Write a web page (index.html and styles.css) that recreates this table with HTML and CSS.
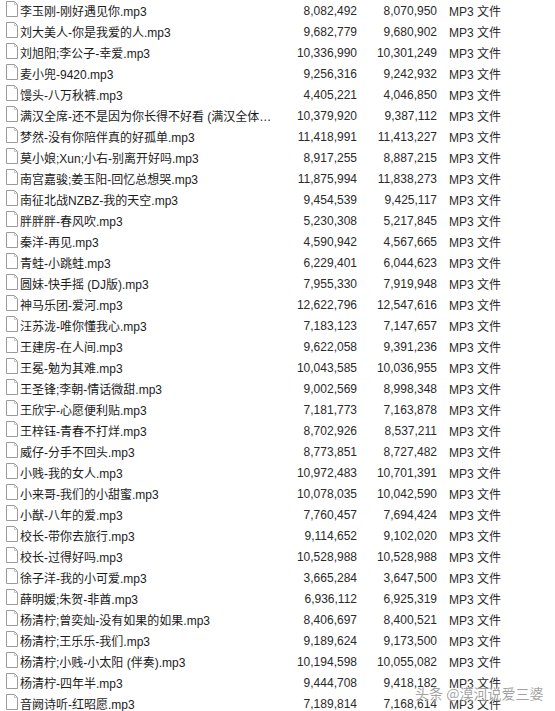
FILE: index.html
```html
<!DOCTYPE html>
<html lang="zh">
<head>
<meta charset="utf-8">
<link rel="stylesheet" href="styles.css">
</head>
<body>
<div class="list" id="list"></div>
<div class="watermark">头条 @漠河说爱三婆</div>
<script src="app.js"></script>
</body>
</html>
```
FILE: styles.css
```css
html, body { margin: 0; padding: 0; background: #ffffff; }
body { width: 555px; height: 711px; overflow: hidden; position: relative;
  font-family: "Liberation Sans", "Noto Sans CJK SC", sans-serif; font-size: 12px; color: #1e1e1e; }
.list { display: flex; flex-direction: column; }
.row { display: grid; grid-template-columns: 20px 258px 79px 80px 1fr; height: 21px; align-items: center; }
.icon { display: flex; justify-content: flex-start; padding-left: 6px; align-self: start; padding-top: 1px; }
.icon svg { display: block; }
.name { white-space: nowrap; overflow: hidden; text-overflow: ellipsis; color: #1b1b1b; }
.num { text-align: right; color: #2a2a2a; }
.type { padding-left: 12px; color: #2a2a2a; white-space: nowrap; }
.watermark { position: absolute; left: 415px; top: 683px; font-size: 14px; color: rgba(120,120,120,0.7);
  font-family: "Noto Sans CJK SC", sans-serif;
  text-shadow: 0 0 1px #fff, 0 0 2px #fff; white-space: nowrap; }
```
FILE: app.js
```js
const data = [
["李玉刚-刚好遇见你.mp3","8,082,492","8,070,950"],
["刘大美人-你是我爱的人.mp3","9,682,779","9,680,902"],
["刘旭阳;李公子-幸爱.mp3","10,336,990","10,301,249"],
["麦小兜-9420.mp3","9,256,316","9,242,932"],
["馒头-八万秋裤.mp3","4,405,221","4,046,850"],
["满汉全席-还不是因为你长得不好看 (满汉全体版).mp3","10,379,920","9,387,112"],
["梦然-没有你陪伴真的好孤单.mp3","11,418,991","11,413,227"],
["莫小娘;Xun;小右-别离开好吗.mp3","8,917,255","8,887,215"],
["南宫嘉骏;姜玉阳-回忆总想哭.mp3","11,875,994","11,838,273"],
["南征北战NZBZ-我的天空.mp3","9,454,539","9,425,117"],
["胖胖胖-春风吹.mp3","5,230,308","5,217,845"],
["秦洋-再见.mp3","4,590,942","4,567,665"],
["青蛙-小跳蛙.mp3","6,229,401","6,044,623"],
["圆妹-快手摇 (DJ版).mp3","7,955,330","7,919,948"],
["神马乐团-爱河.mp3","12,622,796","12,547,616"],
["汪苏泷-唯你懂我心.mp3","7,183,123","7,147,657"],
["王建房-在人间.mp3","9,622,058","9,391,236"],
["王冕-勉为其难.mp3","10,043,585","10,036,955"],
["王圣锋;李朝-情话微甜.mp3","9,002,569","8,998,348"],
["王欣宇-心愿便利贴.mp3","7,181,773","7,163,878"],
["王梓钰-青春不打烊.mp3","8,702,926","8,537,211"],
["威仔-分手不回头.mp3","8,773,851","8,727,482"],
["小贱-我的女人.mp3","10,972,483","10,701,391"],
["小来哥-我们的小甜蜜.mp3","10,078,035","10,042,590"],
["小猷-八年的爱.mp3","7,760,457","7,694,424"],
["校长-带你去旅行.mp3","9,114,652","9,102,020"],
["校长-过得好吗.mp3","10,528,988","10,528,988"],
["徐子洋-我的小可爱.mp3","3,665,284","3,647,500"],
["薛明媛;朱贺-非酋.mp3","6,936,112","6,925,319"],
["杨清柠;曾奕灿-没有如果的如果.mp3","8,406,697","8,400,521"],
["杨清柠;王乐乐-我们.mp3","9,189,624","9,173,500"],
["杨清柠;小贱-小太阳 (伴奏).mp3","10,194,598","10,055,082"],
["杨清柠-四年半.mp3","9,444,708","9,418,182"],
["音阙诗听-红昭愿.mp3","7,189,814","7,168,614"]
];
const icon = '<svg width="12" height="16" viewBox="0 0 12 16"><path d="M0.5 0.5 H8.5 L11.5 3.5 V15.5 H0.5 Z" fill="#fff" stroke="#9a9a9a"/><path d="M8.5 0.5 V3.5 H11.5" fill="none" stroke="#c4c4c4"/></svg>';
const list = document.getElementById('list');
list.innerHTML = data.map(r =>
  `<div class="row"><div class="icon">${icon}</div><div class="name">${r[0]}</div><div class="num">${r[1]}</div><div class="num">${r[2]}</div><div class="type">MP3 文件</div></div>`
).join('');
```
